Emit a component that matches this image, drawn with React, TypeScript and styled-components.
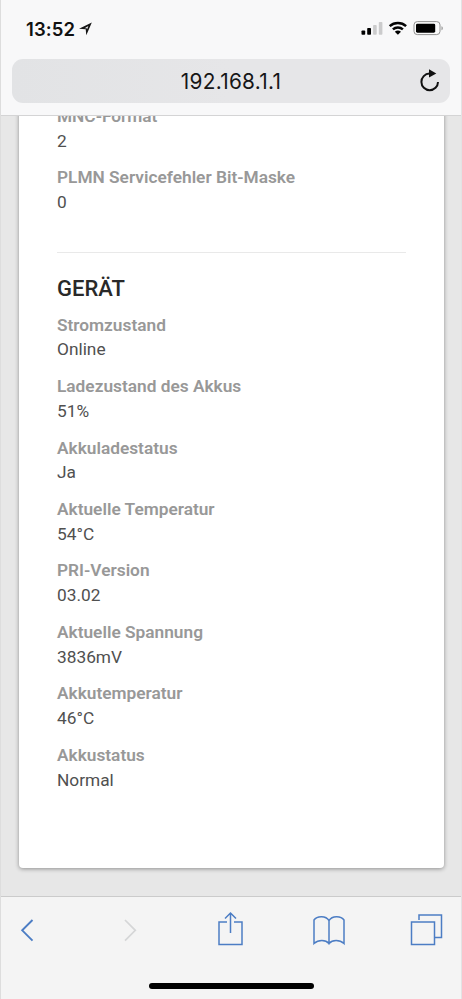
import React from "react";
import styled, { createGlobalStyle } from "styled-components";

const GlobalStyle = createGlobalStyle`
  * { box-sizing: border-box; }
  body { margin: 0; background: #f7f8f9; }
`;

const Phone = styled.div`
  width: 462px;
  height: 999px;
  display: flex;
  flex-direction: column;
  overflow: hidden;
  border-left: 1px solid #dddddd;
  border-right: 1px solid #e3e3e4;
  background: #e7e7e7;
`;

const Header = styled.header`
  flex: none;
  height: 116px;
  padding: 0 11px;
  background: #f8f8f9;
  border-bottom: 1px solid #d4d4d5;
`;

const StatusBar = styled.div`
  height: 59px;
  padding: 0 6px 0 14px;
  display: flex;
  justify-content: space-between;
`;

const Clock = styled.div`
  display: flex;
  gap: 4px;
  padding-top: 17.5px;
  font: 600 18.5px/22px Inter, sans-serif;
  letter-spacing: 0.1px;
  color: #111;
  svg { margin-top: 4.5px; }
`;

const Indicators = styled.div`
  padding-top: 20px;
`;

const AddressBar = styled.div`
  height: 44px;
  border-radius: 11px;
  background: linear-gradient(90deg, #e2e3e5, #e6e6e8 50%);
  display: grid;
  grid-template-columns: 32px 1fr 32px;
  align-items: center;
`;

const Address = styled.div`
  grid-column: 2;
  padding-top: 1px;
  text-align: center;
  font: 400 20.8px/24px Inter, sans-serif;
  letter-spacing: 0.3px;
  color: #161617;
`;

const Viewport = styled.main`
  flex: 1;
  min-height: 0;
  overflow: hidden;
  padding: 0 17px 0 18px;
`;

const Card = styled.section`
  height: 764px;
  margin-top: -12px;
  padding: 0 38px;
  border-radius: 0 0 4px 4px;
  background: #fff;
  box-shadow: 0 1px 4px rgba(0, 0, 0, 0.38);
  font-family: Roboto, sans-serif;
`;

const Section = styled.dl`
  margin: 0;
  display: grid;
  gap: 12.3px;
`;

const Entry = styled.div`
  font-size: 17.3px;
  line-height: 24.6px;
  white-space: nowrap;
`;

const Label = styled.dt`
  font-weight: 600;
  color: #989898;
`;

const Value = styled.dd`
  margin: 0;
  color: #505050;
`;

const Divider = styled.hr`
  margin: 37.2px 0 22px;
  border: 0;
  height: 1px;
  background: #e9e9e9;
`;

const Title = styled.h2`
  margin: 0 0 9.7px;
  font-size: 22px;
  line-height: 28px;
  font-weight: 500;
  color: #292929;
`;

const Toolbar = styled.footer`
  flex: none;
  height: 103px;
  background: #f4f4f4;
  border-top: 1px solid #cbcbcb;
  display: flex;
  flex-direction: column;
  align-items: center;
`;

const Actions = styled.nav`
  width: 100%;
  height: 86px;
  padding: 13px 17px 0 10px;
  display: flex;
  justify-content: space-between;
`;

const Action = styled.button<{ $disabled?: boolean }>`
  width: 34px;
  height: 40px;
  padding: 0;
  border: 0;
  background: none;
  color: ${(p) => (p.$disabled ? "#d5d6d7" : "#4c7dc4")};
  svg {
    display: block;
    fill: none;
    stroke: currentColor;
    stroke-width: 1.5;
    overflow: visible;
  }
`;

const HomeIndicator = styled.div`
  width: 165px;
  height: 6px;
  border-radius: 3px;
  background: #000;
`;

const network = [
  ["MNC-Format", "2"],
  ["PLMN Servicefehler Bit-Maske", "0"],
];

const device = [
  ["Stromzustand", "Online"],
  ["Ladezustand des Akkus", "51%"],
  ["Akkuladestatus", "Ja"],
  ["Aktuelle Temperatur", "54°C"],
  ["PRI-Version", "03.02"],
  ["Aktuelle Spannung", "3836mV"],
  ["Akkutemperatur", "46°C"],
  ["Akkustatus", "Normal"],
];

const Entries = ({ items }: { items: string[][] }) => (
  <Section>
    {items.map(([label, value]) => (
      <Entry key={label}>
        <Label>{label}</Label>
        <Value>{value}</Value>
      </Entry>
    ))}
  </Section>
);

const StatusIcons = () => (
  <svg width="83" height="16" viewBox="361 20 83 16" display="block">
    <rect x="361.5" y="30.5" width="3.7" height="4.3" rx="0.8" />
    <rect x="367.2" y="28" width="3.8" height="6.8" rx="0.8" />
    <rect x="373.1" y="25" width="3.6" height="9.8" rx="0.8" fill="#cbcbcc" />
    <rect x="378.8" y="22" width="3.6" height="12.8" rx="0.8" fill="#cbcbcc" />
    <g fill="none" stroke="#050505" strokeWidth="2.5">
      <path d="M389.7 26.1c4.6-4.2 11.8-4.2 16.4 0" />
      <path d="M392.9 29.4c2.8-2.5 7.2-2.5 10 0" />
    </g>
    <path d="M394.8 31.7q3.1-2.4 6.2 0l-3.1 3.1z" />
    <rect x="414" y="21.6" width="26" height="13" rx="3.3" fill="#fbfbfb" stroke="#929292" />
    <rect x="416" y="23.7" width="19.2" height="9" rx="1.4" />
    <path d="M441.5 26.2c1.7.5 1.7 3.5 0 4z" fill="#929292" />
  </svg>
);

export default function App() {
  return (
    <>
      <GlobalStyle />
      <Phone>
        <Header>
          <StatusBar>
            <Clock>
              13:52
              <svg width="13" height="14" viewBox="0 0 13 14">
                <path d="M0 6.7 12.8 0.5 7.3 13.2 6.7 7.3Z" fill="#151515" />
                <path d="M5.6 6.2 9.4 4.1 8 7.4 7.8 6.2Z" fill="#f8f8f9" />
              </svg>
            </Clock>
            <Indicators><StatusIcons /></Indicators>
          </StatusBar>
          <AddressBar>
            <Address>192.168.1.1</Address>
            <svg width="22" height="26" viewBox="0 0 22 26">
              <path d="M11.5 5.6a8.3 8.3 0 1 0 8.5 8.4" fill="none" stroke="#111" strokeWidth="2" />
              <path d="M11 1.2 18.3 5.6 11 9.6z" fill="#111" />
            </svg>
          </AddressBar>
        </Header>
        <Viewport>
          <Card>
            <Entries items={network} />
            <Divider />
            <Title>GERÄT</Title>
            <Entries items={device} />
          </Card>
        </Viewport>
        <Toolbar>
          <Actions>
            <Action aria-label="Zurück">
              <svg width="34" height="40"><path d="M21.5 10 11.2 20.3 21.5 30.6" strokeWidth="1.9" /></svg>
            </Action>
            <Action aria-label="Vorwärts" $disabled>
              <svg width="34" height="40"><path d="M14 10 24.3 20.3 14 30.6" strokeWidth="1.7" /></svg>
            </Action>
            <Action aria-label="Teilen">
              <svg width="34" height="40"><path d="M16 12H8V34.5H31V12H23M19.5 23V3M14 8.5 19.5 3 25 8.5" /></svg>
            </Action>
            <Action aria-label="Lesezeichen">
              <svg width="34" height="40" viewBox="-2 0 34 40"><path d="M17 34.5V10.5C14 5.500 5 5.500 2 10V33.500C6.500 29.500 13.500 29.500 17 33.500C20.500 29.500 27.500 29.500 32 33.500V10C29 5.500 20 5.500 17 10.500" /></svg>
            </Action>
            <Action aria-label="Tabs">
              <svg width="34" height="40"><rect x="1.5" y="12" width="23" height="22.5" /><path d="M9 10V5H31.5V27.5H25" /></svg>
            </Action>
          </Actions>
          <HomeIndicator />
        </Toolbar>
      </Phone>
    </>
  );
}
